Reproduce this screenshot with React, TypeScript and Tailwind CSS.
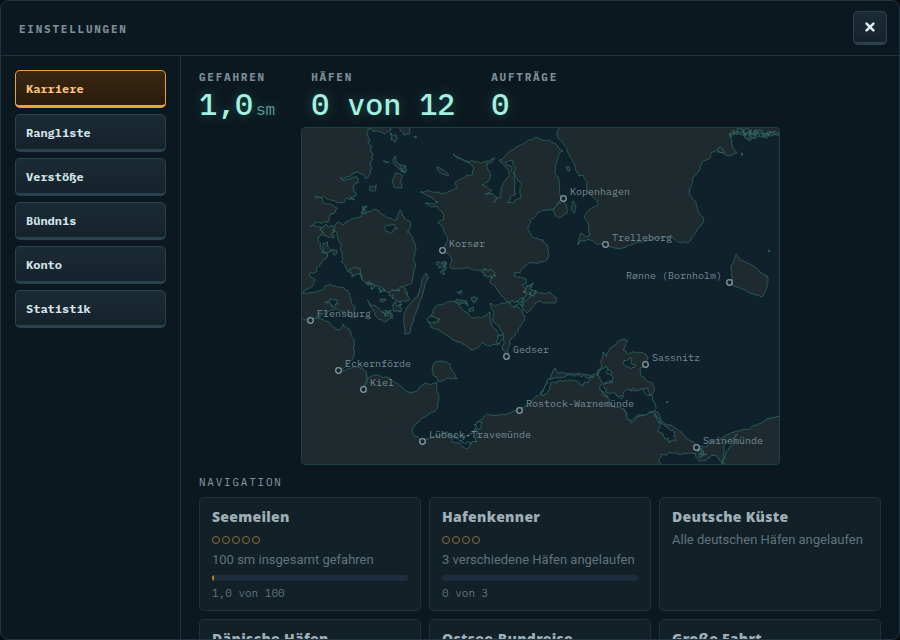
import React from "react";

type Point = [number, number];

type Shape = { points: string; rough: number; water?: boolean };

// Outlines of the western Baltic in chart units, refined into coastlines below.
const SHAPES: Shape[] = [
  // Jutland
  {
    rough: 0.24,
    points:
      "296,120 370,120 370,128 368,137 372,147 372,160 371,168 365,178 355,173 340,177 350,180 357,177 358,183 353,188 357,195 350,197 355,200 337,203 325,197 315,197 323,200 332,205 337,209 333,213 328,223 322,223 310,227 320,227 323,230 318,237 320,245 322,253 328,256 320,265 310,273 315,280 312,287 304,292 296,294",
  },
  // Als and Sundeved
  {
    rough: 0.16,
    points:
      "296,292 304,293 315,292 322,290 330,284 342,287 350,297 355,307 355,318 347,314 337,309 331,310 326,314 316,318 310,320 296,322",
  },
  // German mainland
  {
    rough: 0.12,
    points:
      "296,316 310,320 322,319 330,323 340,330 343,324 350,330 354,340 353,358 346,366 338,370 350,369 362,368 367,373 363,388 368,378 377,375 387,377 397,383 407,392 415,392 425,383 437,383 438,393 438,407 428,415 417,423 412,430 415,436 422,441 430,438 447,432 453,437 452,442 460,443 467,449 470,437 477,423 487,414 500,415 519,410 533,400 541,393 547,382 555,368 558,373 576,374 595,374 600,376 602,390 610,400 623,408 632,423 637,417 653,412 658,412 663,422 675,428 687,438 696,447 707,447 720,440 740,431 757,425 786,413 786,472 296,472",
  },
  // Ruegen and Hiddensee
  {
    rough: 0.18,
    points:
      "597,374 600,362 603,352 606,357 612,347 617,342 628,341 623,350 628,354 643,353 648,358 645,364 640,368 642,377 650,382 655,388 650,397 648,388 643,390 633,388 627,397 615,400 603,395 601,386 613,382 607,378 612,373 604,370",
  },
  // Funen
  {
    rough: 0.16,
    points:
      "338,222 343,225 350,220 363,213 377,210 387,217 397,220 400,210 404,217 411,225 407,232 413,240 416,250 414,260 415,267 412,283 400,290 387,292 372,285 362,280 358,271 350,273 341,262 341,249 338,236 333,230",
  },
  // Zealand
  {
    rough: 0.14,
    points:
      "453,154 457,158 467,161 473,161 482,163 495,158 492,162 487,163 488,170 491,175 488,182 482,185 487,187 492,190 485,194 493,194 497,198 494,203 500,197 501,188 503,183 508,177 507,168 502,162 499,160 508,153 520,145 528,140 537,137 543,140 553,143 558,147 563,151 557,160 555,167 558,177 559,188 560,195 563,198 558,203 553,209 545,210 537,214 530,220 528,230 533,237 543,240 548,247 549,255 547,260 540,262 532,263 523,268 520,273 514,273 515,277 520,277 526,279 527,282 522,285 526,292 525,298 518,301 512,303 503,297 497,290 490,283 492,277 487,272 480,270 470,268 460,268 450,267 452,260 447,253 442,250 445,245 448,240 443,227 438,223 443,220 443,212 437,206 425,203 438,202 432,197 420,192 427,191 440,193 452,190 457,188 455,183 462,178 472,175 474,168 470,164",
  },
  // Amager
  { rough: 0.08, points: "564,200 567,207 567,213 560,218 555,215 553,210 558,203" },
  // Scania
  {
    rough: 0.12,
    points:
      "557,120 557,135 563,143 568,153 575,165 579,176 583,175 587,182 587,188 592,196 597,200 597,206 590,209 584,217 589,227 590,235 587,237 581,233 578,245 580,241 588,239 595,243 605,244 612,247 620,249 628,246 637,242 647,241 667,237 672,237 678,242 688,243 692,237 697,230 703,223 703,217 697,208 696,202 690,195 690,187 693,177 700,167 702,162 710,158 712,152 717,150 723,153 730,156 737,153 733,148 732,140 729,134 740,134 750,135 760,132 770,135 786,134 786,120",
  },
  // Bornholm
  {
    rough: 0.06,
    points:
      "736,254 740,260 752,265 760,272 768,277 767,287 762,297 750,293 740,288 732,285 731,267",
  },
  // Langeland
  {
    rough: 0.08,
    points: "426,273 428,277 423,293 417,310 410,333 405,334 404,317 407,307 417,297 422,280",
  },
  // Aeroe
  { rough: 0.12, points: "367,300 377,307 383,313 393,318 385,322 375,315" },
  // Lolland
  {
    rough: 0.14,
    points:
      "433,313 437,305 447,302 457,302 463,310 468,313 473,318 482,318 490,312 493,327 502,337 498,345 483,343 472,350 460,342 443,333 432,328 428,322",
  },
  // Falster
  {
    rough: 0.15,
    points:
      "490,303 496,306 503,303 513,305 519,308 525,317 520,327 512,338 508,355 503,350 503,333 493,320",
  },
  // Moen
  {
    rough: 0.12,
    points: "523,302 530,297 537,292 550,292 557,298 555,303 540,301 532,308 527,313 523,310",
  },
  // Fehmarn
  { rough: 0.08, points: "432,370 435,362 441,361 450,364 457,379 447,378 438,382 437,377 433,375" },
  // Samsoe and the islets north of Funen
  { rough: 0.1, points: "395,173 402,175 402,188 395,188 392,181" },
  { rough: 0.2, points: "395,156 397,163 403,167 405,173 399,169 393,162" },
  { rough: 0.2, points: "390,133 396,135 395,142 391,140" },
  { rough: 0.2, points: "400,127 410,128 410,134 404,135" },
  { rough: 0.2, points: "369,128 380,127 391,130 386,133 376,131" },
  { rough: 0.2, points: "370,186 377,185 375,191 369,190" },
  { rough: 0.1, points: "437,167 449,175 447,176 438,170" },
  { rough: 0.2, points: "383,161 389,162 386,163" },
  { rough: 0.2, points: "414,136 417,137 415,138" },
  { rough: 0.2, points: "566,167 570,168 570,171 567,170" },
  { rough: 0.12, points: "573,201 576,207 574,213 571,208" },
  { rough: 0.3, points: "443,261 446,268 444,275 442,270" },
  { rough: 0.3, points: "438,261 446,262 444,267 439,268" },
  { rough: 0.3, points: "741,153 743,154 742,156" },
  { rough: 0.3, points: "768,250 770,251 769,252" },
  { rough: 0.3, points: "666,402 668,401 667,403" },
  // Smaland waters
  { rough: 0.35, points: "455,302 460,300 467,301 468,306 460,305" },
  { rough: 0.35, points: "471,299 475,297 477,300 474,303" },
  { rough: 0.35, points: "469,309 473,307 474,311 470,312" },
  { rough: 0.35, points: "457,292 461,290 460,294" },
  // South Funen archipelago
  { rough: 0.4, points: "349,270 361,272 362,279 352,277" },
  { rough: 0.4, points: "366,283 374,284 371,289" },
  { rough: 0.4, points: "378,288 385,291 380,293" },
  { rough: 0.4, points: "389,293 396,291 405,289 408,296 400,303 393,299" },
  { rough: 0.4, points: "380,299 386,300 383,302" },
  { rough: 0.4, points: "394,303 402,305 399,312 393,308" },
  { rough: 0.4, points: "383,312 391,310 393,315 386,316" },
  { rough: 0.4, points: "320,230 331,226 334,238 326,236" },
  { rough: 0.3, points: "323,244 328,242 333,250 327,254 323,250" },
  { rough: 0.3, points: "333,249 337,250 336,255 333,254" },
  // Fjords and lagoons
  {
    water: true,
    rough: 0.2,
    points:
      "505,163 513,161 516,168 514,172 518,181 520,192 521,198 515,200 508,203 511,196 516,194 515,181 512,167",
  },
  { water: true, rough: 0.3, points: "385,227 392,224 397,229 390,233 386,232" },
  { water: true, rough: 0.3, points: "624,360 631,358 635,364 631,369 625,366" },
  {
    water: true,
    rough: 0.3,
    points: "547,384 553,378 565,377 580,376 594,377 580,385 571,380 557,383 548,391 544,396 541,393",
  },
  {
    water: true,
    rough: 0.2,
    points:
      "598,375 605,366 607,374 613,379 603,385 607,393 622,399 628,389 641,388 652,395 654,411 637,416 632,421 624,409 609,402 601,391",
  },
  {
    water: true,
    rough: 0.3,
    points: "655,413 660,421 666,427 675,433 676,441 669,443 664,437 658,430 659,421",
  },
  {
    water: true,
    rough: 0.18,
    points:
      "662,454 671,453 680,455 696,453 700,461 712,455 719,458 722,464 727,442 737,434 726,452 722,470 664,470 660,458",
  },
  { water: true, rough: 0.35, points: "453,437 463,440 472,432 481,422 476,434 470,444 463,443" },
  { water: true, rough: 0.35, points: "325,303 333,299 338,304 331,307" },
  { water: true, rough: 0.3, points: "512,300 518,302 524,298 523,306 514,308 510,304" },
  { water: true, rough: 0.3, points: "497,341 502,334 504,337 500,344" },
  { water: true, rough: 0.35, points: "428,318 434,316 440,319 435,324 430,322" },
  // Skerries: Blekinge, Stege bay, Karrebaek, Usedom, Little Belt
  { rough: 0.6, points: "729,134 737,132 745,136 752,130 757,137 765,133 772,136 778,133 770,134 756,134 745,133" },
  { rough: 0.6, points: "750,132 755,130 759,133 755,137 751,136" },
  { rough: 0.5, points: "718,150 722,148 723,153 720,152" },
  { rough: 0.5, points: "526,288 533,283 536,290 533,296 527,294" },
  { rough: 0.5, points: "486,268 492,270 496,276 489,277" },
  { rough: 0.5, points: "697,452 703,450 707,454 701,457" },
  { rough: 0.5, points: "400,166 406,166 405,172 401,172" },
  { rough: 0.4, points: "362,207 367,206 365,214 361,212" },
];

// Midpoint displacement with a seeded generator keeps the coast identical on every render.
function coastline(shape: Shape, seed: number): string {
  let state = seed * 7919 + 17;
  const random = () => {
    state = (state * 1103515245 + 12345) % 2147483648;
    return state / 2147483648 - 0.5;
  };
  let pts: Point[] = shape.points.split(" ").map((p) => p.split(",").map(Number) as Point);
  for (let pass = 0; pass < 4; pass++) {
    const next: Point[] = [];
    pts.forEach((a, i) => {
      const b = pts[(i + 1) % pts.length];
      const dx = b[0] - a[0];
      const dy = b[1] - a[1];
      const length = Math.hypot(dx, dy);
      next.push(a);
      if (length > 1.2) {
        const shift = Math.min(length, 12) * shape.rough * 2.4 * random();
        next.push([
          (a[0] + b[0]) / 2 - (dy / length) * shift,
          (a[1] + b[1]) / 2 + (dx / length) * shift,
        ]);
      }
    });
    pts = next;
  }
  return "M" + pts.map((p) => p[0].toFixed(1) + " " + p[1].toFixed(1)).join("L") + "Z";
}

const HARBOURS = [
  { name: "Kopenhagen", x: 563, y: 198 },
  { name: "Korsør", x: 442, y: 250 },
  { name: "Trelleborg", x: 605, y: 244 },
  { name: "Rønne (Bornholm)", x: 729, y: 282, left: true },
  { name: "Flensburg", x: 310, y: 320 },
  { name: "Gedser", x: 506, y: 356 },
  { name: "Eckernförde", x: 338, y: 370 },
  { name: "Kiel", x: 363, y: 389 },
  { name: "Sassnitz", x: 645, y: 364 },
  { name: "Rostock-Warnemünde", x: 519, y: 410 },
  { name: "Lübeck-Travemünde", x: 422, y: 441 },
  { name: "Swinemünde", x: 696, y: 447 },
];

const TABS = ["Karriere", "Rangliste", "Verstöße", "Bündnis", "Konto", "Statistik"];

const STATS = [
  { label: "Gefahren", value: "1,0", unit: "sm" },
  { label: "Häfen", value: "0 von 12" },
  { label: "Aufträge", value: "0" },
];

type Award = {
  title: string;
  text: string;
  levels?: number;
  done?: number;
  total?: number;
  progress?: string;
};

const AWARDS: Award[] = [
  { title: "Seemeilen", text: "100 sm insgesamt gefahren", levels: 5, done: 1, total: 100, progress: "1,0 von 100" },
  { title: "Hafenkenner", text: "3 verschiedene Häfen angelaufen", levels: 4, done: 0, total: 3, progress: "0 von 3" },
  { title: "Deutsche Küste", text: "Alle deutschen Häfen angelaufen" },
  { title: "Dänische Häfen", text: "Alle dänischen Häfen angelaufen" },
  { title: "Ostsee-Rundreise", text: "Alle Häfen angelaufen" },
  { title: "Große Fahrt", text: "Eine lange Strecke gefahren" },
];

function SeaChart() {
  return (
    <svg
      viewBox="302 128 477 336"
      role="img"
      aria-label="Seekarte"
      className="mx-auto block w-full max-w-[479px] rounded border border-[#21414a] bg-[#0f212b]"
    >
      {SHAPES.map((shape, i) => (
        <path
          key={i}
          d={coastline(shape, i + 1)}
          className={shape.water ? "fill-[#0f212b] stroke-[#35766f]" : "fill-[#1e2a2e] stroke-[#35766f]"}
          strokeWidth={0.7}
          strokeLinejoin="round"
        />
      ))}
      {HARBOURS.map((h) => (
        <g key={h.name}>
          <circle cx={h.x + 0.5} cy={h.y + 0.5} r={2.8} strokeWidth={1.3} className="fill-[#15252d] stroke-[#8398a1]" />
          <text
            x={h.left ? h.x - 7 : h.x + 7}
            y={h.y - 3}
            textAnchor={h.left ? "end" : "start"}
            className="fill-[#758a92] text-[10px]"
          >
            {h.name}
          </text>
        </g>
      ))}
    </svg>
  );
}

function AwardCard({ award }: { award: Award }) {
  return (
    <article className="min-h-[114px] rounded-[5px] border border-[#1d323c] bg-[#122028] px-3 pt-2">
      <h3 className="mb-0.5 font-['Noto_Sans',sans-serif] text-sm leading-[22px] font-black tracking-[0.02em] text-[#9fafb6]">
        {award.title}
      </h3>
      {award.levels && (
        <div className="flex h-5 items-center gap-0.5" aria-label={`0 von ${award.levels} Stufen`}>
          {Array.from({ length: award.levels }, (_, i) => (
            <span key={i} className="size-2 rounded-full border border-[#936a35]" />
          ))}
        </div>
      )}
      <p className="font-['Roboto',sans-serif] text-[13px] leading-5 whitespace-nowrap text-[#5f747c]">
        {award.text}
      </p>
      {award.progress && (
        <>
          <div className="mt-[5px] h-1.5 overflow-hidden rounded-full bg-[#1d2d3b]">
            <div
              className="h-full bg-[#b98339]"
              style={{ width: `${((award.done ?? 0) / (award.total ?? 1)) * 100}%` }}
            />
          </div>
          <p className="mt-[3px] text-[11px] leading-[18px] text-[#5f747c]">{award.progress}</p>
        </>
      )}
    </article>
  );
}

export default function App() {
  return (
    <div className="h-screen bg-[#060c10] font-['IBM_Plex_Mono','Liberation_Mono',monospace]">
      <div className="flex h-full flex-col overflow-hidden rounded-lg border border-[#1e3541] bg-[#0c181f]">
        <header className="flex h-[55px] shrink-0 items-center justify-between border-b border-[#1e3541] pr-3 pl-[18px]">
          <h1 className="pt-0.5 text-[11px] font-bold tracking-[0.16em] text-[#7b8f98] uppercase">Einstellungen</h1>
          <button
            type="button"
            aria-label="Schließen"
            className="flex h-[34px] w-[34px] items-center justify-center rounded-[5px] border border-b-[3px] border-[#2b414d] bg-linear-to-b from-[#1b2b34] to-[#14222b] text-[#dbe9ee]"
          >
            <svg viewBox="0 0 10 10" className="size-2.5" aria-hidden="true">
              <path d="M1.6 1.6L8.4 8.4M8.4 1.6L1.6 8.4" stroke="currentColor" strokeWidth="2.6" strokeLinecap="round" />
            </svg>
          </button>
        </header>
        <div className="flex min-h-0 flex-1">
          <nav className="flex w-[180px] shrink-0 flex-col gap-1.5 border-r border-[#1e3541] p-3.5">
            {TABS.map((tab, i) => (
              <button
                key={tab}
                type="button"
                className={
                  i === 0
                    ? "h-[38px] rounded-[5px] border border-b-[3px] border-[#e8a33d] bg-linear-to-b from-[#3a2812] to-[#2b1b0b] px-2.5 pt-0.5 text-left text-xs font-bold text-[#ffc577]"
                    : "h-[38px] rounded-[5px] border border-b-[3px] border-[#2b414d] bg-linear-to-b from-[#1b2b34] to-[#14222b] px-2.5 pt-0.5 text-left text-xs font-bold text-[#d3e4ea]"
                }
              >
                {tab}
              </button>
            ))}
          </nav>
          <main className="min-w-0 flex-1 overflow-hidden px-[18px] pt-[13px]">
            <dl className="flex gap-9">
              {STATS.map((stat) => (
                <div key={stat.label}>
                  <dt className="text-[11px] leading-4 font-bold tracking-[0.16em] text-[#7b8f98] uppercase">
                    {stat.label}
                  </dt>
                  <dd className="flex h-[42px] items-baseline gap-[3px] text-[30px] leading-[38px] font-medium text-[#a5f0e0] [text-shadow:0_0_12px_#3bb9a066]">
                    {stat.value}
                    {stat.unit && <span className="text-base font-normal text-[#5d9f97]">{stat.unit}</span>}
                  </dd>
                </div>
              ))}
            </dl>
            <SeaChart />
            <h2 className="mt-2 text-[11px] leading-[18px] tracking-[0.16em] text-[#8498a1] uppercase">Navigation</h2>
            <div className="mt-1.5 grid grid-cols-3 gap-2">
              {AWARDS.map((award) => (
                <AwardCard key={award.title} award={award} />
              ))}
            </div>
          </main>
        </div>
      </div>
    </div>
  );
}
